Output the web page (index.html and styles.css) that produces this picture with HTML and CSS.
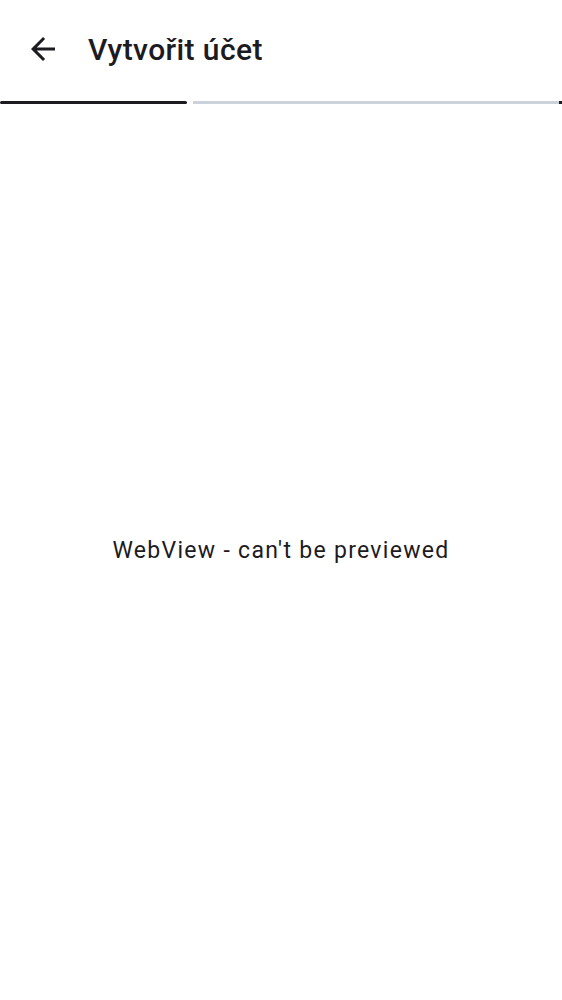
FILE: index.html
```html
<!DOCTYPE html>
<html>
<head>
<meta charset="utf-8">
<link rel="stylesheet" href="styles.css">
</head>
<body>
<div class="screen">
  <header class="topbar">
    <button class="back" aria-label="Zpět">
      <svg viewBox="0 0 24 24" width="36" height="36"><path d="M20 11H7.83l5.59-5.59L12 4l-8 8 8 8 1.41-1.41L7.83 13H20v-2z" fill="#1c1b1f"/></svg>
    </button>
    <h1 class="title">Vytvořit účet</h1>
  </header>
  <div class="progress">
    <div class="seg seg-done"></div>
    <div class="seg seg-rest"></div>
    <div class="dot"></div>
  </div>
  <main class="content">
    <p class="placeholder">WebView - can't be previewed</p>
  </main>
</div>
</body>
</html>
```
FILE: styles.css
```css
html, body {
  margin: 0;
  padding: 0;
  background: #ffffff;
}
body {
  font-family: Roboto, "Noto Sans", sans-serif;
  color: #1c1b1f;
}
.screen {
  width: 562px;
  height: 1000px;
  display: flex;
  flex-direction: column;
}
.topbar {
  height: 100px;
  display: flex;
  align-items: center;
  padding-left: 25px;
  box-sizing: border-box;
  padding-bottom: 2px;
}
.back {
  width: 36px;
  height: 36px;
  padding: 0;
  border: 0;
  background: none;
  display: flex;
  margin-right: 27px;
}
.title {
  margin: 0;
  font-size: 30px;
  font-weight: 500;
  letter-spacing: 0.4px;
}
.progress {
  display: flex;
  align-items: center;
  height: 4px;
}
.seg {
  height: 3px;
}
.seg-done {
  width: 187px;
  background: #1c1b1f;
  border-radius: 2px;
}
.seg-rest {
  margin-left: 6px;
  width: 366px;
  background: #cbd2dc;
}
.dot {
  width: 3px;
  height: 3px;
  background: #1c1b1f;
}
.content {
  flex: 1;
  display: flex;
  align-items: center;
  justify-content: center;
  padding-bottom: 4px;
}
.placeholder {
  margin: 0;
  font-size: 23px;
  letter-spacing: 1.3px;
}
```
